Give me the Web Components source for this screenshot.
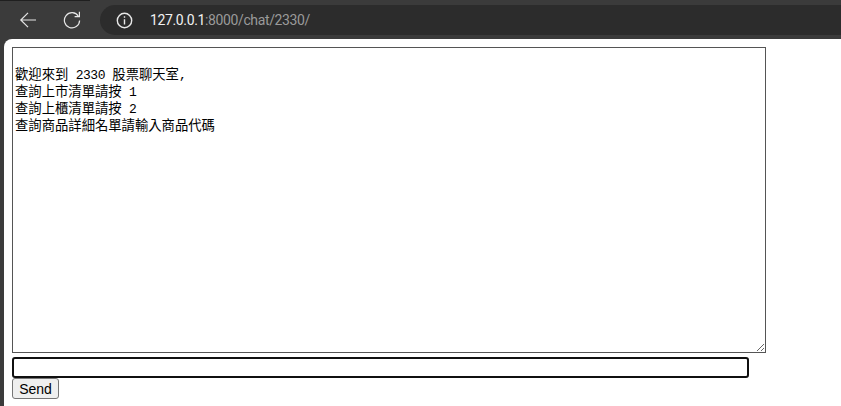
<!DOCTYPE html>
<html><head><meta charset="utf-8"><style>
html,body{margin:0;padding:0;background:#3b3b3b;height:406px;overflow:hidden}
</style></head><body>
<browser-frame>
<chat-page>
<chat-line></chat-line>
<chat-line>歡迎來到<lat-run> 2330 </lat-run>股票聊天室<lat-run>,</lat-run></chat-line>
<chat-line>查詢上市清單請按<lat-run> 1</lat-run></chat-line>
<chat-line>查詢上櫃清單請按<lat-run> 2</lat-run></chat-line>
<chat-line>查詢商品詳細名單請輸入商品代碼</chat-line>
</chat-page>
</browser-frame>
<script>
function def(name, html){customElements.define(name, class extends HTMLElement{constructor(){super();this.attachShadow({mode:'open'}).innerHTML=html;}});}
def('lat-run',`<style>:host{display:inline;font:13px/17px "Liberation Mono",monospace;letter-spacing:-.47px;white-space:pre}</style><slot></slot>`);
def('chat-line',`<style>:host{display:block;height:17px;line-height:17px;white-space:nowrap}</style><slot></slot>`);
def('browser-toolbar',`<style>
:host{display:flex;align-items:center;height:39px;box-sizing:border-box;background:#3b3b3b;padding:1px 0 0 0;position:relative}
:host::before{content:"";position:absolute;left:0;top:0;width:90px;height:1px;background:#1f1f1f}
.b{flex:none;display:block}
.url{flex:1;margin:0 0 0 19px;height:30px;border-radius:15px 0 0 15px;background:#2c2c2c;display:flex;align-items:center;font:14px "Roboto","Liberation Sans",sans-serif;color:#9a9a9a;letter-spacing:-.37px}
.url svg{margin-left:16px;margin-right:17px;flex:none}
b{font-weight:400;color:#f1f1f1}
</style>
<svg class="b" style="margin-left:18px" width="18" height="16" viewBox="0 0 18 16" fill="none" stroke="#e6e6e6" stroke-width="1.2"><path d="M18 8H2.5M10 .8 2.8 8l7.2 7.2"/></svg>
<svg class="b" style="margin-left:27px" width="18" height="18" viewBox="0 0 18 18" fill="none" stroke="#e6e6e6" stroke-width="1.2"><path d="M15.4 5.2A7.6 7.6 0 1 0 16.6 9.5"/><path d="M16.4 .8V5.6H11.6"/></svg>
<div class="url"><svg width="17" height="17" viewBox="0 0 17 17" fill="none" stroke="#e8e8e8" stroke-width="1.4"><circle cx="8.5" cy="8.5" r="7.2"/><path d="M8.5 7.2V12.5M8.5 4.2V5.8"/></svg><span><b>127.0.0.1</b>:8000/chat/2330/</span></div>`);
def('chat-page',`<style>
:host{display:block;background:#fff;border-top-left-radius:8px;margin-left:4px;height:367px;box-sizing:border-box;padding:8px 8px 0 8px;font:13.33px "Liberation Sans",Arial,sans-serif}
.log{display:block;box-sizing:border-box;width:754px;height:306px;margin:0;padding:0 2px 2px;border:1px solid #555;background:#fff;color:#000;font:13.33px/17px "Noto Sans CJK TC",monospace;overflow:auto;resize:both}
input{display:block;box-sizing:border-box;width:737px;height:21px;margin:4px 0 0;padding:1px 2px;border:2px solid #101010;border-radius:3px;background:#fff;outline:0}
button{display:block;margin:0;box-sizing:border-box;width:47px;height:21px;padding:1px 6px;font:14px "Liberation Sans",Arial,sans-serif;color:#000;background:#efefef;border:1px solid #767676;border-radius:3px}
</style>
<div class="log" role="log"><slot></slot></div><input type="text"><button>Send</button>`);
def('browser-frame',`<style>:host{display:block}</style><browser-toolbar></browser-toolbar><slot></slot>`);
</script>
</body></html>
